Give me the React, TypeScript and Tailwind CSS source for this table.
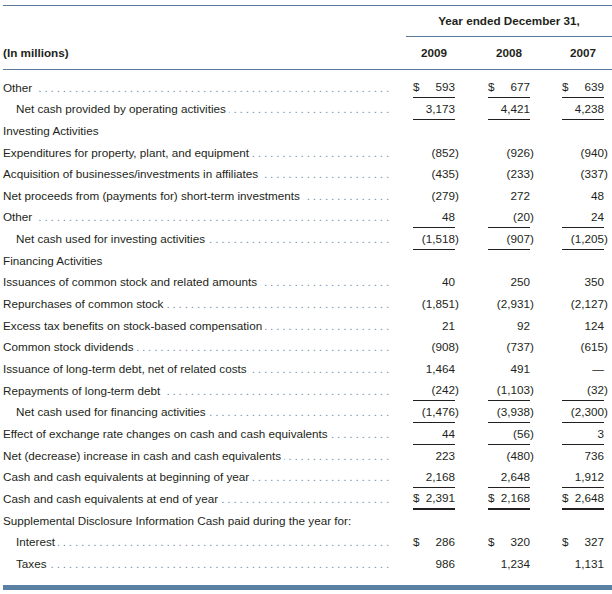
type Row = {
  label: string;
  indent?: boolean;
  dots?: boolean;
  values?: string[];
  line?: "thin" | "thick";
};

const ROWS: Row[] = [
  { label: "Other", values: ["$593", "$677", "$639"], line: "thin" },
  { label: "Net cash provided by operating activities", indent: true, values: ["3,173", "4,421", "4,238"], line: "thin" },
  { label: "Investing Activities", dots: false },
  { label: "Expenditures for property, plant, and equipment", values: ["(852)", "(926)", "(940)"] },
  { label: "Acquisition of businesses/investments in affiliates", values: ["(435)", "(233)", "(337)"] },
  { label: "Net proceeds from (payments for) short-term investments", values: ["(279)", "272", "48"] },
  { label: "Other", values: ["48", "(20)", "24"], line: "thin" },
  { label: "Net cash used for investing activities", indent: true, values: ["(1,518)", "(907)", "(1,205)"], line: "thin" },
  { label: "Financing Activities", dots: false },
  { label: "Issuances of common stock and related amounts", values: ["40", "250", "350"] },
  { label: "Repurchases of common stock", values: ["(1,851)", "(2,931)", "(2,127)"] },
  { label: "Excess tax benefits on stock-based compensation", values: ["21", "92", "124"] },
  { label: "Common stock dividends", values: ["(908)", "(737)", "(615)"] },
  { label: "Issuance of long-term debt, net of related costs", values: ["1,464", "491", "—"] },
  { label: "Repayments of long-term debt", values: ["(242)", "(1,103)", "(32)"], line: "thin" },
  { label: "Net cash used for financing activities", indent: true, values: ["(1,476)", "(3,938)", "(2,300)"], line: "thin" },
  { label: "Effect of exchange rate changes on cash and cash equivalents", values: ["44", "(56)", "3"], line: "thin" },
  { label: "Net (decrease) increase in cash and cash equivalents", values: ["223", "(480)", "736"] },
  { label: "Cash and cash equivalents at beginning of year", values: ["2,168", "2,648", "1,912"], line: "thin" },
  { label: "Cash and cash equivalents at end of year", values: ["$2,391", "$2,168", "$2,648"], line: "thick" },
  { label: "Supplemental Disclosure Information Cash paid during the year for:", dots: false },
  { label: "Interest", indent: true, values: ["$286", "$320", "$327"] },
  { label: "Taxes", indent: true, values: ["986", "1,234", "1,131"] },
];

const DOTS = ".".repeat(70);

const Cell = ({ value, line, className }: { value: string; line?: Row["line"]; className: string }) => {
  const dollar = value.startsWith("$");
  let num = dollar ? value.slice(1) : value;
  const paren = num.endsWith(")");
  if (paren) num = num.slice(0, -1);
  return (
    <div
      className={`flex h-full w-[42px] items-center justify-between ${className} ${
        line === "thin" ? "border-b border-[#231f20]" : line === "thick" ? "border-b-2 border-[#231f20]" : ""
      }`}
    >
      <span>{dollar ? "$" : ""}</span>
      <span className="whitespace-nowrap">
        {num}
        {paren && <span className="inline-block w-0">)</span>}
      </span>
    </div>
  );
};

export default function App() {
  return (
    <div className="h-[594px] w-[612px] bg-white pt-[5px] pl-[3px] font-['Liberation_Sans',Arial,sans-serif] text-[11.7px] text-[#231f20]">
      {/* header */}
      <div className="border-t border-[#5b7a99]">
        <div className="flex h-[31px] justify-end">
          <div className="flex w-[206px] items-center justify-center border-b border-[#5b7a99] pb-[1px] font-bold">
            Year ended December 31,
          </div>
        </div>
        <div className="flex h-[33px] items-center border-b border-[#5b7a99] font-bold">
          <div className="w-[403px]">(In millions)</div>
          <div className="flex pl-[7px]">
            <div className="w-[42px] text-center">2009</div>
            <div className="ml-[33px] w-[42px] text-center">2008</div>
            <div className="ml-[32px] w-[42px] text-center">2007</div>
          </div>
        </div>
      </div>

      {/* body */}
      <div className="pt-[6.5px]">
        {ROWS.map((r, i) => (
          <div key={i} className="flex h-[21.67px] items-center">
            <div className={`flex w-[403px] items-center pr-[14px] ${r.indent ? "pl-[13px]" : ""}`}>
              <span className="whitespace-nowrap bg-white pr-[3px]">{r.label}</span>
              {r.dots !== false && (
                <div className="flex min-w-0 flex-1 justify-end overflow-hidden text-[#6a8fb4]">
                  <span className="whitespace-pre tracking-[2.85px]">{DOTS}</span>
                </div>
              )}
            </div>
            {r.values && (
              <div className="flex h-full pl-[7px]">
                <Cell value={r.values[0]} line={r.line} className="" />
                <Cell value={r.values[1]} line={r.line} className="ml-[33px]" />
                <Cell value={r.values[2]} line={r.line} className="ml-[32px]" />
              </div>
            )}
          </div>
        ))}
      </div>

      <div className="mt-[10px] h-[5px] bg-[#5a80a4]" />
    </div>
  );
}
